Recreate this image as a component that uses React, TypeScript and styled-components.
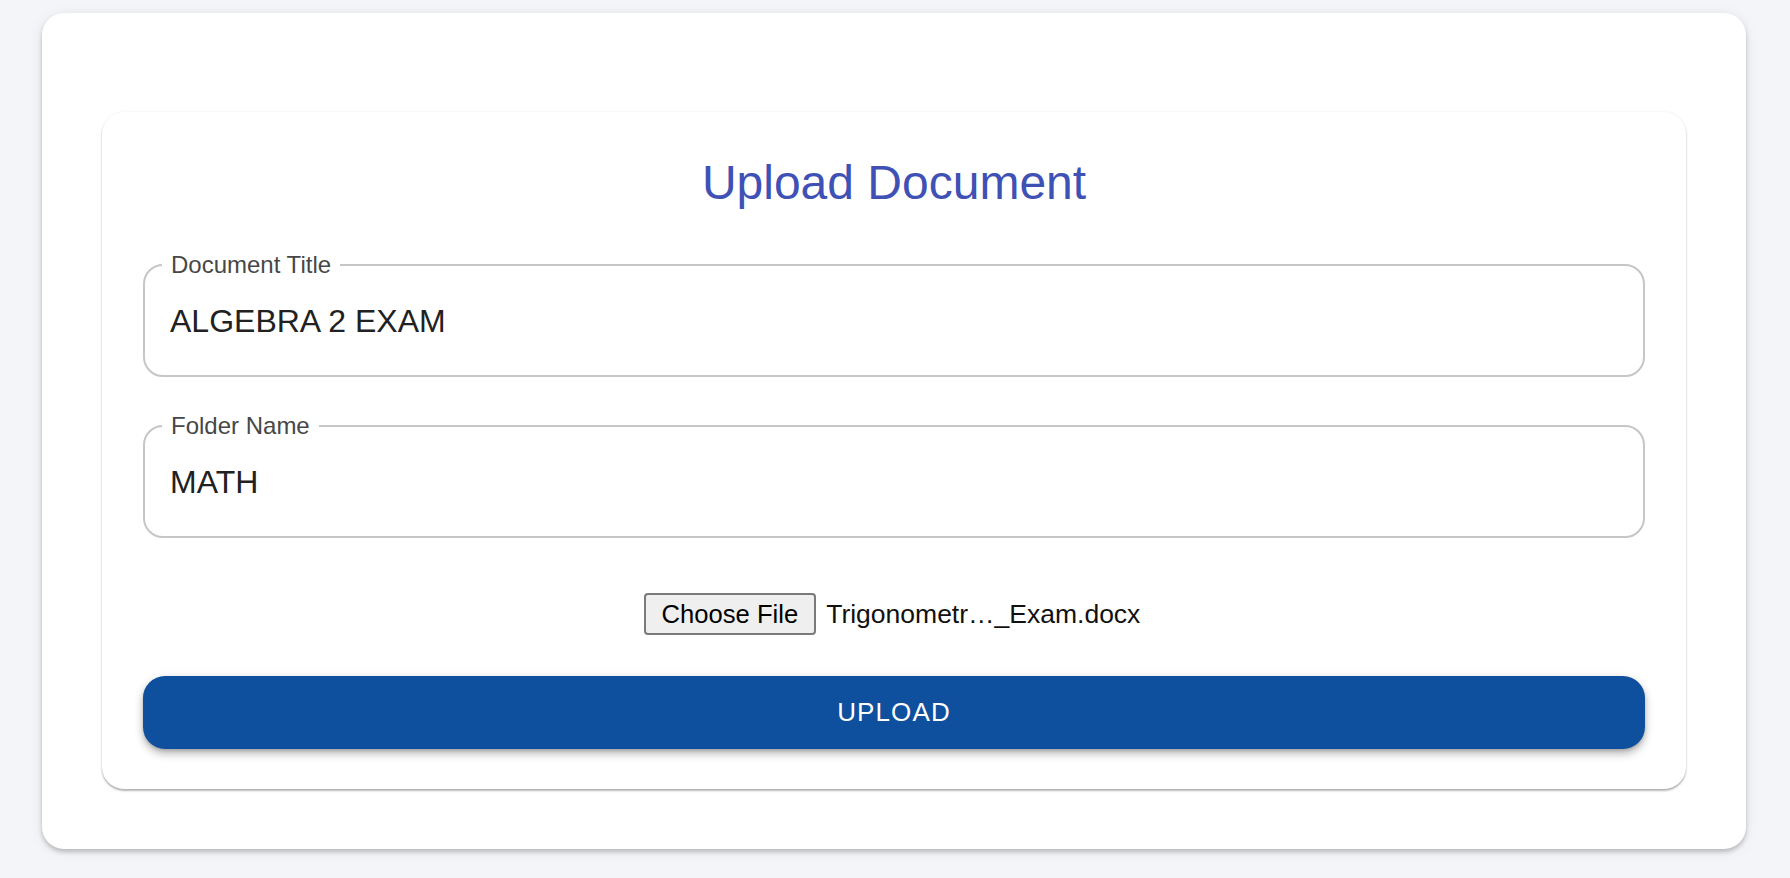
import React from "react";
import styled, { createGlobalStyle } from "styled-components";

const GlobalStyle = createGlobalStyle`
  html, body {
    margin: 0;
    padding: 0;
    background: #f4f5f9;
  }
  body {
    font-family: "Liberation Sans", Arial, Helvetica, sans-serif;
    -webkit-font-smoothing: antialiased;
  }
  *, *::before, *::after { box-sizing: border-box; }
`;

const Page = styled.main`
  padding: 13px 44px 29px 42px;
`;

const OuterCard = styled.section`
  background: #ffffff;
  border-radius: 22px;
  padding: 99px 60px 60px;
  box-shadow: 0 3px 4px rgba(0, 0, 0, 0.2), 0 2px 14px rgba(0, 0, 0, 0.08);
`;

const FormCard = styled.form`
  background: #ffffff;
  border-radius: 22px;
  padding: 43px 41px 40px;
  display: flex;
  flex-direction: column;
  box-shadow: 0 2px 2px rgba(0, 0, 0, 0.28), 0 0 3px rgba(0, 0, 0, 0.07);
`;

const Title = styled.h1`
  margin: 0 0 40px;
  font-size: 48px;
  line-height: 56px;
  font-weight: 400;
  color: #3f51b5;
  text-align: center;
`;

const Field = styled.fieldset<{ $gapAfter: number }>`
  margin: 0 0 ${(p) => p.$gapAfter}px;
  padding: 0 17px;
  min-inline-size: 0;
  border: 2px solid #c6c6c6;
  border-radius: 20px;
`;

const Legend = styled.legend`
  padding: 0 9px;
  font-size: 24px;
  line-height: 28px;
  color: #474747;
`;

const TextInput = styled.input`
  display: block;
  width: 100%;
  height: 96px;
  margin: 0;
  padding: 0 8px 12px;
  border: none;
  outline: none;
  background: transparent;
  font-family: inherit;
  font-size: 32px;
  color: #212121;
`;

const FileRow = styled.div`
  display: flex;
  justify-content: center;
  align-items: center;
  gap: 10px;
  height: 42px;
  margin-top: 20px;
  padding-right: 4px;
`;

const ChooseButton = styled.button`
  height: 42px;
  padding: 0 16px;
  background: #efefef;
  border: 2px solid #7a7a7a;
  border-radius: 4px;
  font-family: inherit;
  font-size: 25.6px;
  color: #000;
`;

const FileName = styled.span`
  font-size: 26.5px;
  color: #111;
`;

const UploadButton = styled.button`
  margin-top: 41px;
  height: 73px;
  width: 100%;
  border: none;
  border-radius: 22px;
  background: #0e509e;
  color: #ffffff;
  font-family: inherit;
  font-size: 26px;
  letter-spacing: 1.1px;
  text-transform: uppercase;
  box-shadow: 0 5px 8px rgba(0, 0, 0, 0.25), 0 2px 3px rgba(0, 0, 0, 0.12),
    0 0 12px rgba(0, 0, 0, 0.05);
`;

export default function App() {
  return (
    <>
      <GlobalStyle />
      <Page>
        <OuterCard>
          <FormCard onSubmit={(e) => e.preventDefault()}>
            <Title>Upload Document</Title>
            <Field $gapAfter={35}>
              <Legend>Document Title</Legend>
              <TextInput defaultValue="ALGEBRA 2 EXAM" />
            </Field>
            <Field $gapAfter={35}>
              <Legend>Folder Name</Legend>
              <TextInput defaultValue="MATH" />
            </Field>
            <FileRow>
              <ChooseButton type="button">Choose File</ChooseButton>
              <FileName>Trigonometr…_Exam.docx</FileName>
            </FileRow>
            <UploadButton type="submit">Upload</UploadButton>
          </FormCard>
        </OuterCard>
      </Page>
    </>
  );
}
